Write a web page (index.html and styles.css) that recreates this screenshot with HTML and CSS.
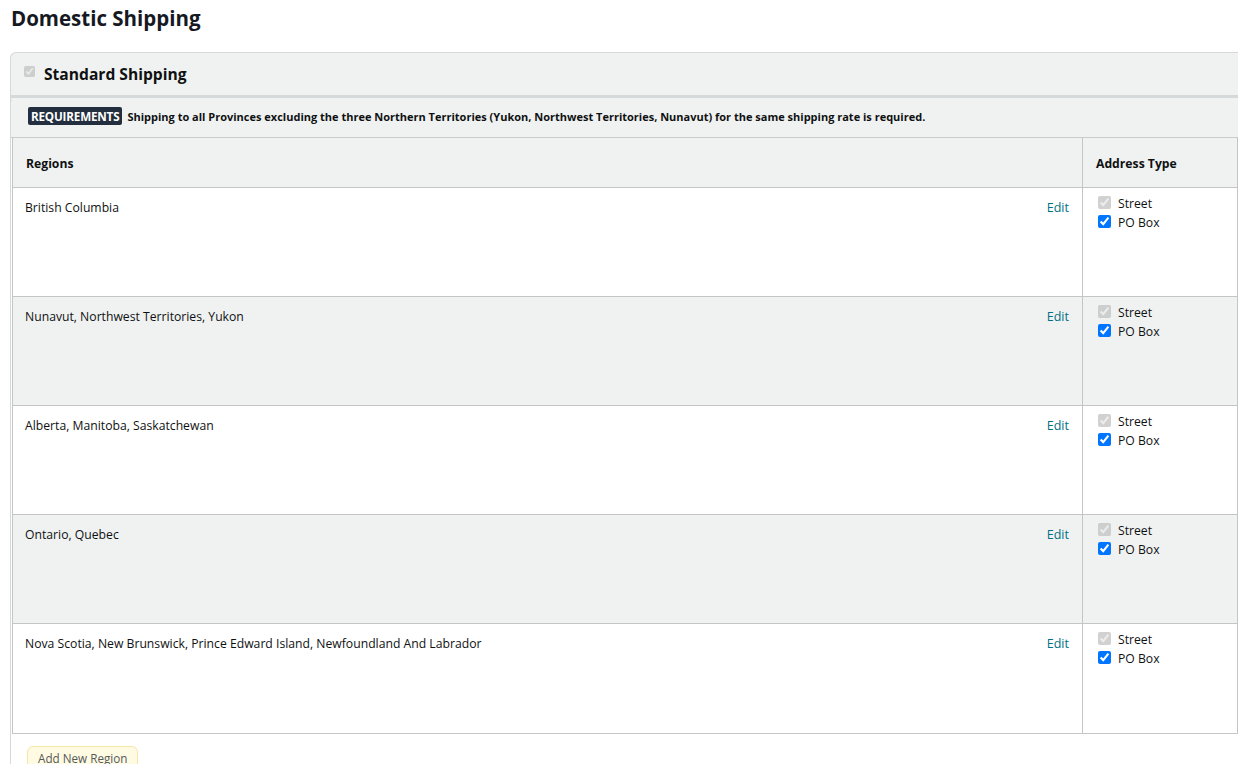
FILE: index.html
```html
<!DOCTYPE html>
<html lang="en">
<head>
  <meta charset="UTF-8">
  <title>Domestic Shipping</title>
  <link rel="stylesheet" href="styles.css">
</head>
<body>
  <h1 class="page-title">Domestic Shipping</h1>

  <div class="shipping-group">
    <div class="group-head">
      <input type="checkbox" class="head-check" checked disabled>
      <span class="group-name">Standard Shipping</span>
    </div>

    <div class="group-body">
      <div class="requirements">
        <span class="req-badge">REQUIREMENTS</span>
        Shipping to all Provinces excluding the three Northern Territories (Yukon, Northwest Territories, Nunavut) for the same shipping rate is required.
      </div>

      <table class="region-table">
        <thead>
          <tr>
            <th class="col-region">Regions</th>
            <th class="col-type">Address Type</th>
          </tr>
        </thead>
        <tbody>
          <tr>
            <td class="region-cell"><span>British Columbia</span><a href="#" class="edit-link">Edit</a></td>
            <td class="type-cell">
              <label><input type="checkbox" checked disabled> Street</label>
              <label><input type="checkbox" checked> PO Box</label>
            </td>
          </tr>
          <tr class="alt">
            <td class="region-cell"><span>Nunavut, Northwest Territories, Yukon</span><a href="#" class="edit-link">Edit</a></td>
            <td class="type-cell">
              <label><input type="checkbox" checked disabled> Street</label>
              <label><input type="checkbox" checked> PO Box</label>
            </td>
          </tr>
          <tr>
            <td class="region-cell"><span>Alberta, Manitoba, Saskatchewan</span><a href="#" class="edit-link">Edit</a></td>
            <td class="type-cell">
              <label><input type="checkbox" checked disabled> Street</label>
              <label><input type="checkbox" checked> PO Box</label>
            </td>
          </tr>
          <tr class="alt">
            <td class="region-cell"><span>Ontario, Quebec</span><a href="#" class="edit-link">Edit</a></td>
            <td class="type-cell">
              <label><input type="checkbox" checked disabled> Street</label>
              <label><input type="checkbox" checked> PO Box</label>
            </td>
          </tr>
          <tr class="last">
            <td class="region-cell"><span>Nova Scotia, New Brunswick, Prince Edward Island, Newfoundland And Labrador</span><a href="#" class="edit-link">Edit</a></td>
            <td class="type-cell">
              <label><input type="checkbox" checked disabled> Street</label>
              <label><input type="checkbox" checked> PO Box</label>
            </td>
          </tr>
        </tbody>
      </table>

      <div class="group-foot">
        <button class="btn-add">Add New Region</button>
      </div>
    </div>
  </div>
</body>
</html>
```

FILE: styles.css
```css
body {
  margin: 8px 0 0 8px;
  font-family: 'Open Sans', 'Noto Sans', sans-serif;
  color: #0f1111;
  background-color: #fff;
}

.page-title {
  margin: 0 0 0 3px;
  font-size: 20.5px;
  font-weight: bold;
  line-height: 20px;
  color: #16191f;
}

.shipping-group {
  width: 1228px;
  margin: 24px 0 0 2px;
  border: 1px solid #d5d9d9;
  border-right: none;
  border-bottom: none;
  border-radius: 6px 0 0 0;
  background-color: #f0f2f2;
}

.group-head {
  display: flex;
  align-items: center;
  height: 42px;
  padding-left: 13px;
  border-bottom: 3px solid #d5d9d9;
}

.head-check {
  width: 11px;
  height: 11px;
  margin: 0 9px 6px 0;
}

.group-name {
  font-size: 15.6px;
  font-weight: bold;
}

.group-body {
  margin-left: -1px;
  border-left: 1px solid #d5d9d9;
  border-radius: 6px 0 0 0;
  background-color: #fff;
}

.requirements {
  display: flex;
  align-items: center;
  gap: 5px;
  height: 40px;
  padding: 0 0 3px 17px;
  box-sizing: border-box;
  font-size: 11px;
  font-weight: bold;
  background-color: #f0f2f2;
  border-radius: 6px 0 0 0;
  border-bottom: 1px solid #c9cccc;
}

.req-badge {
  padding: 1px 3px;
  border-radius: 2px;
  background-color: #232f3e;
  color: #fff;
  font-size: 11.7px;
  letter-spacing: -0.2px;
}

.region-table {
  width: 1226px;
  margin-left: 1px;
  border-collapse: collapse;
  font-size: 12.2px;
}

.region-table th,
.region-table td {
  border: 1px solid #c4c6c6;
  text-align: left;
  vertical-align: top;
}

.region-table th {
  height: 48px;
  padding: 1px 13px 0;
  vertical-align: middle;
  font-weight: bold;
  background-color: #f0f2f2;
}

.region-table thead tr th {
  border-top: none;
}

.col-region {
  padding-left: 12px;
}

.col-type {
  width: 128px;
}

.region-table tbody tr {
  height: 109px;
}

.region-table tbody tr.last {
  height: 110px;
}

.region-table tr.alt td {
  background-color: #f0f2f2;
}

.region-cell {
  padding: 11px 13px 0 12px;
  line-height: 18px;
}

.region-cell span {
  float: left;
}

.edit-link {
  float: right;
  font-size: 12.5px;
  color: #007185;
  text-decoration: none;
}

.type-cell {
  padding: 6px 13px 0 15px;
  line-height: 19px;
}

.type-cell label {
  display: flex;
  align-items: center;
  gap: 7px;
}

.type-cell input {
  width: 13px;
  height: 13px;
  margin: 0 0 3px 0;
}

.group-foot {
  height: 30px;
  padding: 12px 16px 0;
  box-sizing: border-box;
  overflow: hidden;
  background-color: #fff;
}

.btn-add {
  padding: 3px 10px;
  font-family: 'Open Sans', sans-serif;
  font-size: 11.7px;
  color: #565959;
  background-color: #fffbe3;
  border: 1px solid #f5e7a8;
  border-radius: 6px;
}
```
